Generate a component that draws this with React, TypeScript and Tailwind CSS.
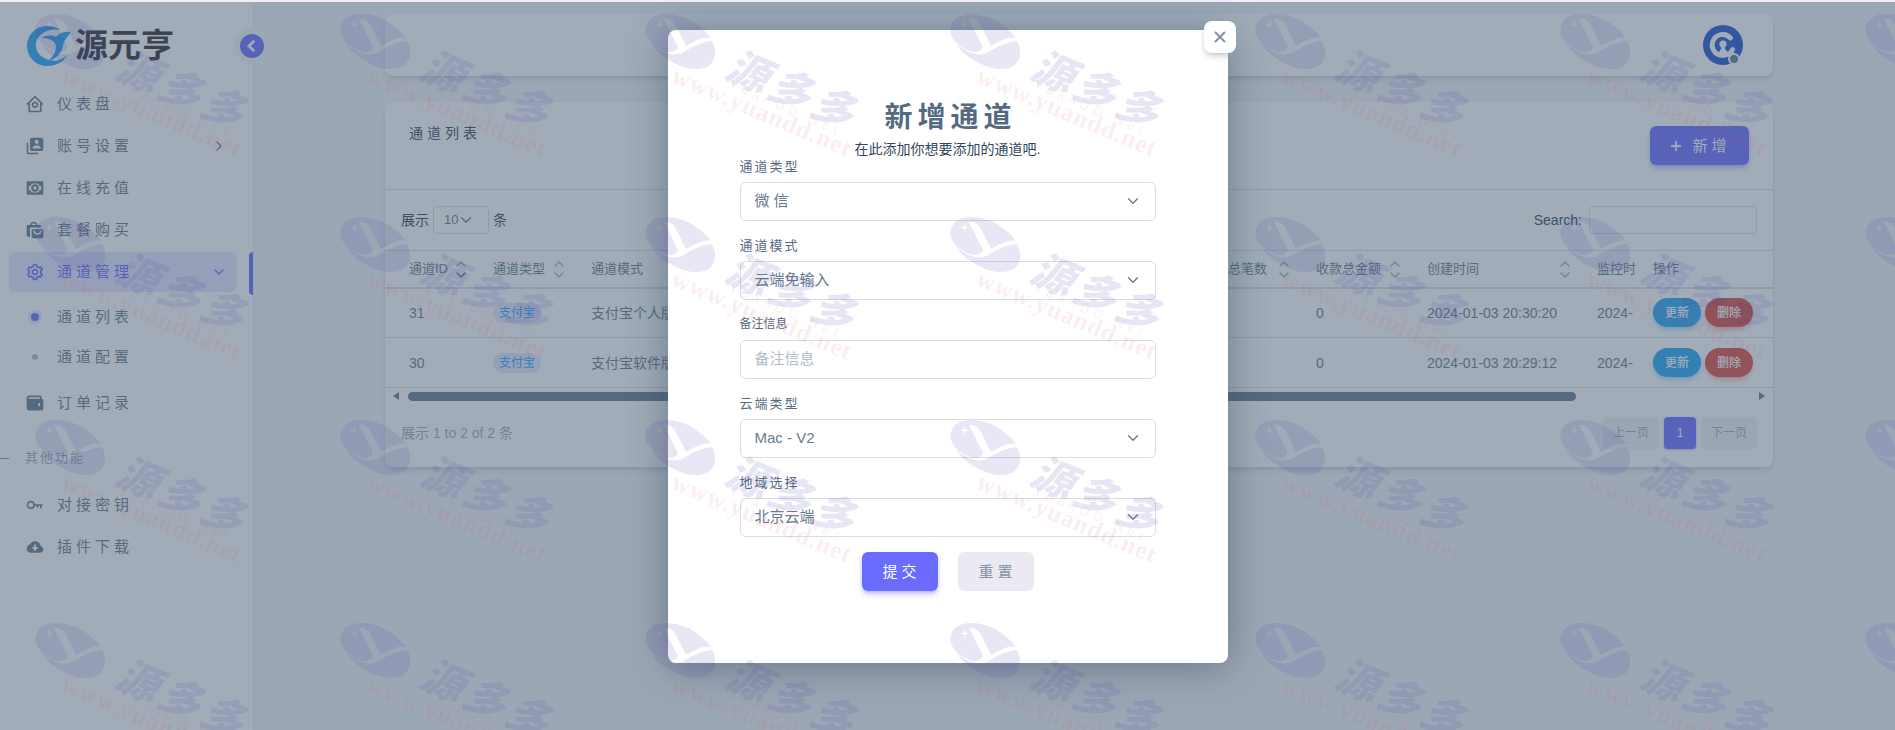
import { useState } from 'react'
import { ChevronDown, ChevronRight, ChevronUp } from 'lucide-react'
import type { IconType } from 'react-icons'
import {
  BiChevronLeft,
  BiCog,
  BiHomeCircle,
  BiKey,
  BiPlus,
  BiSolidCloudDownload,
  BiSolidShoppingBags,
  BiSolidUserAccount,
  BiSolidWallet,
  BiX,
} from 'react-icons/bi'

type MenuEntry = {
  label: string
  icon: IconType
}

type Channel = {
  id: number
  type: string
  mode: string
  createdAt: string
}

const channels: Channel[] = [
  { id: 31, type: '支付宝', mode: '支付宝个人版', createdAt: '2024-01-03 20:30:20' },
  { id: 30, type: '支付宝', mode: '支付宝软件版', createdAt: '2024-01-03 20:29:12' },
]

const watermarkColumns = [0, 305, 610, 915, 1220, 1525, 1830]
const watermarkRows = [0, 203, 406, 609]

export default function App() {
  const [isOpen, setIsOpen] = useState(true)

  return (
    <div className="relative flex min-h-screen flex-col overflow-hidden bg-[#f5f5f9] font-['Liberation_Sans','Noto_Sans_CJK_SC',sans-serif] text-sm text-[#697a8d]">
      <div className="h-0.5 bg-[#f6f0f5]" />
      <div className="relative flex flex-1">
        <Sidebar />
        <main className="min-w-0 flex-1">
          <div className="mx-auto max-w-[1440px] px-[26px] pt-3">
            <Navbar />
            <ChannelCard onAdd={() => setIsOpen(true)} />
          </div>
        </main>

        {isOpen ? (
          <div className="absolute inset-0 bg-[#435971]/50 pt-7">
            <ChannelDialog onClose={() => setIsOpen(false)} />
          </div>
        ) : null}
      </div>
      <Watermark />
    </div>
  )
}

function Sidebar() {
  return (
    <aside className="relative mr-2.5 w-[253px] shrink-0 bg-white pt-6 shadow-sm">
      <a className="flex h-10 items-center gap-1 pl-[26px]" href="#">
        <BrandMark />
        <span className="text-[33px] leading-10 font-bold text-[#33312f]">
          源元亨
        </span>
      </a>
      <button
        aria-label="收起菜单"
        className="absolute top-[26px] -right-[17px] flex h-9 w-9 items-center justify-center rounded-full border-6 border-[#f5f5f9] bg-[#696cff] text-white"
        type="button"
      >
        <BiChevronLeft className="h-6 w-6 shrink-0" strokeWidth={1} />
      </button>

      <nav className="mt-[18px] text-[15px] tracking-[4px]">
        <ul className="space-y-0.5">
          <MenuItem label="仪表盘" icon={BiHomeCircle} />
          <MenuItem label="账号设置" icon={BiSolidUserAccount} hasChildren />
          <MenuItem label="在线充值" icon={MoneyIcon} />
          <MenuItem label="套餐购买" icon={BiSolidShoppingBags} />
          <li className="flex justify-between">
            <a
              className="ml-[9px] flex h-10 w-[228px] items-center rounded-md bg-[#696cff]/16 pl-4 text-[#696cff]"
              href="#"
            >
              <BiCog className="mr-3 h-5 w-5" />
              <span className="flex-1">通道管理</span>
              <ChevronDown className="mr-2.5 h-4 w-4" />
            </a>
            <span className="h-[43px] w-1 rounded-l bg-[#696cff]" />
          </li>
        </ul>
        <ul className="mt-0.5">
          <li>
            <a className="flex h-10 items-center pl-7" href="#">
              <span className="mr-[15px] h-3.5 w-3.5 rounded-full border-3 border-[#e7e7ff] bg-[#696cff]" />
              通道列表
            </a>
          </li>
          <li>
            <a className="flex h-10 items-center pl-8" href="#">
              <span className="mr-[19px] h-1.5 w-1.5 rounded-full bg-[#b4bdc6]" />
              通道配置
            </a>
          </li>
        </ul>
        <ul className="mt-1.5">
          <MenuItem label="订单记录" icon={BiSolidWallet} />
        </ul>
        <div className="mt-6 mb-4 flex h-[22px] items-center gap-4 text-[13px] tracking-[2px] text-[#a1acb8]">
          <span className="h-px w-[9px] bg-[#8592a3]" />
          其他功能
        </div>
        <ul className="space-y-0.5">
          <MenuItem label="对接密钥" icon={BiKey} />
          <MenuItem label="插件下载" icon={BiSolidCloudDownload} />
        </ul>
      </nav>
    </aside>
  )
}

function MenuItem({
  label,
  icon: Icon,
  hasChildren = false,
}: MenuEntry & { hasChildren?: boolean }) {
  return (
    <li>
      <a className="ml-[9px] flex h-10 w-[228px] items-center pl-4" href="#">
        <Icon className="mr-3 h-5 w-5" />
        <span className="flex-1">{label}</span>
        {hasChildren ? <ChevronRight className="mr-2.5 h-4 w-4" /> : null}
      </a>
    </li>
  )
}

function Navbar() {
  return (
    <header className="flex h-[62px] items-center justify-end rounded-lg bg-white pr-[30px] shadow-md shadow-[#a1acb8]/40">
      <button aria-label="用户" className="rounded-full" type="button">
        <svg className="h-10 w-10" viewBox="0 0 40 40" fill="none">
          <circle cx="20" cy="20" r="20" fill="#2155cf" />
          <path
            d="M27.500 13A10.500 10.500 0 1 0 20 30.500C25 30 28.500 27.500 29.500 24.500"
            stroke="#fff"
            strokeWidth="5"
            strokeLinecap="round"
          />
          <circle cx="20" cy="19" r="3.6" fill="#fff" />
          <path d="M18.200 20h3.600v3.500l3 4-4.500 2-4.500-2 2.400-4z" fill="#fff" />
          <circle cx="31" cy="34" r="6" fill="#fff" />
          <circle cx="31" cy="34" r="4" fill="#697a8d" />
        </svg>
      </button>
    </header>
  )
}

function ChannelCard({ onAdd }: { onAdd: () => void }) {
  return (
    <section className="mt-[26px] rounded-lg bg-white pb-[18px] shadow-md shadow-[#a1acb8]/40">
      <header className="flex h-[88px] items-start justify-between border-b border-[#d9dee3] px-6 pt-6">
        <h2 className="leading-[14px] tracking-[4px] text-[#32475c]">
          通道列表
        </h2>
        <button
          className="flex h-[39px] w-[99px] items-center justify-center gap-2 rounded-md bg-[#696cff] text-[15px] text-white shadow-md shadow-[#696cff]/40"
          type="button"
          onClick={onAdd}
        >
          <BiPlus className="h-4 w-4" strokeWidth={1} />
          <span className="tracking-[4px]">新增</span>
        </button>
      </header>

      <div className="flex h-15 items-center justify-between px-4 text-[#32475c]">
        <label className="flex items-center gap-1">
          展示
          <span className="relative flex items-center text-[#697a8d]">
            <select className="h-7 w-14 appearance-none rounded border border-[#d9dee3] bg-transparent pl-2.5 text-[13px]">
              <option>10</option>
            </select>
            <ChevronDown
              className="pointer-events-none absolute left-6 h-[18px] w-[18px]"
              strokeWidth={1.75}
            />
          </span>
          条
        </label>
        <label className="flex items-center gap-[7px]">
          Search:
          <input
            className="h-7 w-[168px] rounded border border-[#d9dee3] bg-transparent px-2"
            type="search"
          />
        </label>
      </div>

      <table className="w-full table-fixed border-collapse text-left">
        <thead className="border-t border-b-2 border-[#d9dee3] text-[13px]">
          <tr className="h-[37px]">
            <HeadCell width="w-[84px]" label="通道ID" sort="desc" />
            <HeadCell width="w-[98px]" label="通道类型" sort="none" />
            <HeadCell width="" label="通道模式" />
            <HeadCell width="w-[114px]" label="收款总笔数" sort="none" />
            <HeadCell width="w-[111px]" label="收款总金额" sort="none" />
            <HeadCell width="w-[170px]" label="创建时间" sort="none" />
            <HeadCell width="w-[61px]" label="监控时" />
            <th className="w-[139px] pt-0.5 pl-[19px] font-normal">操作</th>
          </tr>
        </thead>
        <tbody>
          {channels.map((channel) => (
            <tr className="h-[50px] border-b border-[#d9dee3]" key={channel.id}>
              <td className="pl-6">{channel.id}</td>
              <td className="pl-6">
                <span className="inline-flex h-5 w-12 items-center justify-center rounded-full bg-[#e7e7ff] text-xs text-[#23a7f7]">
                  {channel.type}
                </span>
              </td>
              <td className="pl-6">{channel.mode}</td>
              <td className="pl-6">0</td>
              <td className="pl-6">0</td>
              <td className="pl-6 whitespace-nowrap">{channel.createdAt}</td>
              <td className="pl-6">2024-</td>
              <td className="pl-[19px]">
                <div className="flex gap-1 text-xs font-medium text-white">
                  <button
                    className="h-[29px] w-12 rounded-full bg-[#23a7f7] shadow-md shadow-[#23a7f7]/30"
                    type="button"
                  >
                    更新
                  </button>
                  <button
                    className="h-[29px] w-12 rounded-full bg-[#df4b41] shadow-md shadow-[#df4b41]/30"
                    type="button"
                  >
                    删除
                  </button>
                </div>
              </td>
            </tr>
          ))}
        </tbody>
      </table>

      <div className="flex h-4 items-center px-2 text-[#697a8d]">
        <svg className="h-2 w-1.5" viewBox="0 0 6 8" fill="currentColor">
          <path d="M6 0v8L0 4z" />
        </svg>
        <div className="mx-[9px] flex-1">
          <div className="h-[9px] w-[87%] rounded-full bg-[#697a8d]" />
        </div>
        <svg className="h-2 w-1.5" viewBox="0 0 6 8" fill="currentColor">
          <path d="M0 0v8l6-4z" />
        </svg>
      </div>

      <footer className="mt-[13px] flex items-center justify-between px-4">
        <p className="text-[#a1acb8]">展示 1 to 2 of 2 条</p>
        <nav className="flex gap-[5px] text-xs">
          <button
            className="h-8 w-14 rounded bg-[#f0f2f4] text-[#a1acb8]"
            type="button"
          >
            上一页
          </button>
          <button
            className="h-8 w-8 rounded bg-[#696cff] text-white shadow-sm shadow-[#696cff]/40"
            type="button"
          >
            1
          </button>
          <button
            className="h-8 w-14 rounded bg-[#f0f2f4] text-[#a1acb8]"
            type="button"
          >
            下一页
          </button>
        </nav>
      </footer>
    </section>
  )
}

function HeadCell({
  width,
  label,
  sort,
}: {
  width: string
  label: string
  sort?: 'none' | 'desc'
}) {
  return (
    <th className={`${width} pt-0.5 pb-0 pl-6 font-normal whitespace-nowrap`}>
      <div className="flex items-center justify-between">
        {label}
        {sort ? (
          <span className="flex flex-col text-[#a1acb8]">
            <ChevronUp className="-mb-[5px] h-4 w-4" />
            <ChevronDown
              className={
                sort === 'desc' ? 'h-4 w-4 text-[#566a7f]' : 'h-4 w-4'
              }
            />
          </span>
        ) : null}
      </div>
    </th>
  )
}

function ChannelDialog({ onClose }: { onClose: () => void }) {
  return (
    <div
      aria-labelledby="dialog-title"
      className="relative mx-auto w-full max-w-[560px] rounded-lg bg-white px-[72px] pt-[70px] pb-[72px] shadow-[0_4px_40px_rgba(40,60,85,0.45)]"
      role="dialog"
    >
      <button
        aria-label="关闭"
        className="absolute -top-[9px] -right-2 flex h-8 w-8 items-center justify-center rounded-lg bg-white text-[#8592a3] shadow-md shadow-[#a1acb8]/50"
        type="button"
        onClick={onClose}
      >
        <BiX className="h-6 w-6" />
      </button>

      <h3
        className="pl-1.5 text-center text-[28px] leading-9 font-bold tracking-[5px] text-[#566a7f]"
        id="dialog-title"
      >
        新增通道
      </h3>
      <p className="mt-1 text-center leading-[18px] text-[#32475c]">
        在此添加你想要添加的通道吧.
      </p>

      <form onSubmit={(event) => event.preventDefault()}>
        <div className="space-y-4">
          <SelectField id="type" label="通道类型" value="微信" spaced />
          <SelectField id="mode" label="通道模式" value="云端免输入" />
          <div>
            <label
              className="block text-xs leading-[17px] text-[#566a7f]"
              htmlFor="remark"
            >
              备注信息
            </label>
            <input
              className="mt-[7px] block h-[39px] w-full rounded-md border border-[#d9dee3] bg-transparent px-3.5 pb-0.5 text-[15px] outline-none placeholder:text-[#b4bdc6] focus:border-[#696cff]"
              id="remark"
              placeholder="备注信息"
            />
          </div>
          <SelectField id="cloud" label="云端类型" value="Mac - V2" />
          <SelectField id="region" label="地域选择" value="北京云端" />
        </div>

        <div className="mt-[15px] flex justify-center gap-5 text-[15px]">
          <button
            className="h-[39px] w-[76px] rounded-md bg-[#696cff] pl-1 tracking-[4px] text-white shadow-md shadow-[#696cff]/40"
            type="submit"
          >
            提交
          </button>
          <button
            className="h-[39px] w-[76px] rounded-md bg-[#ebe9f1] pl-1 tracking-[4px] text-[#8592a3]"
            type="reset"
          >
            重置
          </button>
        </div>
      </form>
    </div>
  )
}

function SelectField({
  id,
  label,
  value,
  spaced = false,
}: {
  id: string
  label: string
  value: string
  spaced?: boolean
}) {
  return (
    <div>
      <label
        className="block text-[13px] leading-[17px] tracking-[2px] text-[#566a7f]"
        htmlFor={id}
      >
        {label}
      </label>
      <div className="relative mt-[7px]">
        <select
          className={`block h-[39px] w-full appearance-none rounded-md border border-[#d9dee3] bg-transparent px-3.5 pb-0.5 text-[15px] outline-none focus:border-[#696cff] ${
            spaced ? 'tracking-[4px]' : ''
          }`}
          id={id}
        >
          <option>{value}</option>
        </select>
        <ChevronDown
          className="pointer-events-none absolute top-2.5 right-3.5 h-[18px] w-[18px]"
          strokeWidth={1.75}
        />
      </div>
    </div>
  )
}

function MoneyIcon({ className }: { className?: string }) {
  return (
    <svg className={className} viewBox="0 0 24 24" fill="currentColor">
      <path
        fillRule="evenodd"
        d="M3 4h18a1 1 0 0 1 1 1v14a1 1 0 0 1-1 1H3a1 1 0 0 1-1-1V5a1 1 0 0 1 1-1zm5 2.500A4 4 0 0 1 4.500 10v4A4 4 0 0 1 8 17.500h8a4 4 0 0 1 3.500-3.500v-4A4 4 0 0 1 16 6.500z"
      />
      <path
        fillRule="evenodd"
        d="M12 7.500a4.500 4.500 0 1 0 0 9 4.500 4.500 0 0 0 0-9zm0 2.500a2 2 0 1 1 0 4 2 2 0 0 1 0-4z"
      />
    </svg>
  )
}

function BrandMark() {
  return (
    <svg className="h-10 w-[45px]" viewBox="0 0 45 40" fill="#23a7f7">
      <path d="M34 4C31 1 26 0 21 0A20 20 0 0 0 21 40C30 40 38 36 41 29 36 34 30 36 23 34 13 31 9 24 10 17 12 8 22 2 34 4z" />
      <path d="M44.500 6C38 5 33 7 30 11 26 9 20 9 16 12 24 12 29 15 30 20 30 26 27 31 21 36 30 33 36 27 37 19 38 14 42 11 44.500 6z" />
    </svg>
  )
}

function Watermark() {
  return (
    <svg
      aria-hidden="true"
      className="pointer-events-none absolute inset-0 h-full w-full"
    >
      {watermarkRows.map((y) =>
        watermarkColumns.map((x, index) => (
          <g key={`${x}-${y}`} transform={`translate(${x} ${y})`}>
            <g fill="#463caa" fillOpacity="0.12">
              <path
                fillRule="evenodd"
                d="M36 26C40 12 60 11 78 19 88 24 97 32 101 38 96 36 87 39 76 46L65 24C62 20 58 18 54 19L68 47C66 52 60 53 55 51 42 46 33 36 36 26zM49 20l1.200 3.300L54 24l-3.300 1.200L50 29l-1.500-3.500L45 25l3.500-1.500z"
              />
              <path d="M41 43C50 52 62 57 72 53 82 47 90 42 102 41 107 50 106 59 100 65 93 70 79 71 66 64 55 59 46 52 41 43z" />
            </g>
            {index < watermarkColumns.length - 1 ? <WatermarkText /> : null}
          </g>
        )),
      )}
    </svg>
  )
}

function WatermarkText() {
  return (
    <>
      <text
        className="font-['Noto_Sans_CJK_SC',sans-serif] text-[42px] font-black tracking-[4px] italic"
        fill="#463caa"
        fillOpacity="0.12"
        transform="translate(113 77) rotate(23)"
      >
        源多多
      </text>
      <g fill="#e04858" fillOpacity="0.1">
        <text
          className="font-['Liberation_Sans',sans-serif] text-[13px] tracking-[5px]"
          transform="translate(118 88) rotate(23)"
        >
          YuanDD.Net
        </text>
        <text
          className="font-['Liberation_Serif',serif] text-[25px] font-bold tracking-[1px]"
          transform="translate(60 82) rotate(23)"
        >
          www.yuandd.net
        </text>
      </g>
    </>
  )
}
